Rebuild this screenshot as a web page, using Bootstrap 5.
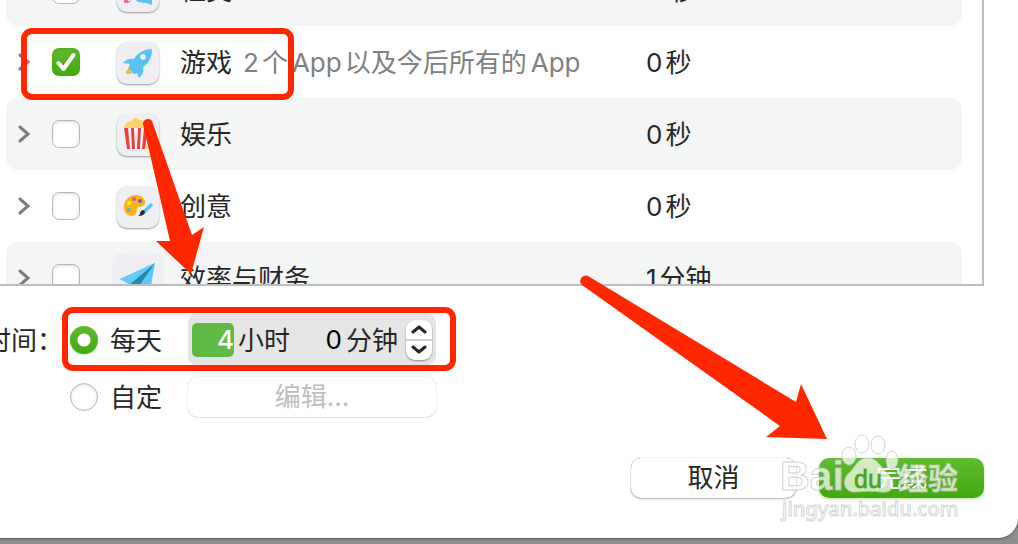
<!DOCTYPE html>
<html lang="zh-CN">
<head>
<meta charset="utf-8">
<meta name="viewport" content="width=device-width, initial-scale=1">
<title>App 限额</title>
<link href="https://cdn.jsdelivr.net/npm/bootstrap@5.3.0/dist/css/bootstrap.min.css" rel="stylesheet">
<style>
  body { background: #8e8e8e; font-family: Inter, "Noto Sans CJK SC", sans-serif; font-size: 26px; line-height: 40px; color: #262626; }
  .sheet { background: #fff; border-bottom-right-radius: 20px; padding-bottom: 40px; box-shadow: 0 1px 2px #555; margin-bottom: 6px; }
  .app-list { height: 286px; margin-right: 34px; padding: 0 20px 0 6px; border: solid #bdbdbd; border-width: 0 2px 2px 0; overflow: hidden; }
  .app-table { width: 100%; table-layout: fixed; border-collapse: separate; border-spacing: 0; margin-top: -46px; }
  .app-table td { height: 72px; padding: 0; vertical-align: middle; white-space: nowrap; }
  .app-table td:nth-child(n+3) { padding-top: 2px; }
  .app-table tr:nth-child(odd) td { background: #f4f6f5; }
  .app-table td:first-child { border-radius: 12px 0 0 12px; padding-left: 12px; }
  .app-table td:last-child { border-radius: 0 12px 12px 0; }
  .c-toggle { width: 46px; } .c-check { width: 58px; } .c-icon { width: 70px; } .c-time { width: 316px; }
  .disclose { border: 0; background: none; padding: 0; display: block; width: 12px; }
  .disclose svg, .app-icon svg, .stepper svg { display: block; }
  .form-check-input.tick, .form-check-input.dot { width: 28px; height: 28px; margin: 0; border: 1px solid #b9b9b9; box-shadow: inset 0 1px 3px #0002; float: none; display: block; flex: none; }
  .form-check-input.tick { border-radius: 7px; }
  .form-check-input.tick:checked { border: 0; background: url("data:image/svg+xml,%3Csvg xmlns='http://www.w3.org/2000/svg' viewBox='0 0 28 28'%3E%3Cpath d='M6.500 15l5 6L21.500 7' fill='none' stroke='%23fff' stroke-width='4' stroke-linecap='round' stroke-linejoin='round'/%3E%3C/svg%3E"), linear-gradient(#61ba31, #42aa0d); }
  .form-check-input.dot:checked { border: 0; background: radial-gradient(circle, #fff 6px, #fff0 7px), linear-gradient(#61ba31, #42aa0d); box-shadow: 0 1px 2px #0003; }
  .app-icon { width: 42px; height: 42px; margin-left: 7px; border-radius: 10px; background: #efeef3; box-shadow: 0 1px 2px #0006; overflow: hidden; }
  .app-icon.large { width: 52px; height: 52px; margin-left: 2px; box-shadow: none; }
  .detail { color: #808080; margin-left: 11px; }
  .unit { margin-left: 3px; }
  .detail .unit { margin-right: 4px; }
  .limit-label { width: 63px; overflow: hidden; white-space: nowrap; }
  .limit { padding-top: 28px; row-gap: 12px; line-height: 36px; }
  .choice { width: 118px; margin-left: 7px; }
  .choice label { margin-left: 12px; }
  .duration { width: 248px; height: 51px; padding: 0 4px; border-radius: 8px; background: #e5e5e5; }
  .duration input { width: 42px; height: 34px; border: 0; padding: 0; text-align: right; background: none; color: #000; outline: 0; border-radius: 5px; }
  .duration input.active { background: #62ba46; color: #fff; font-weight: 500; }
  .duration .minutes { margin-left: 10px; }
  .limit label, .limit-label span { padding-top: 2px; }
  .stepper { width: 26px; height: 40px; margin-left: auto; border-radius: 9px; background: #fff; box-shadow: 0 1px 2px #0006; }
  .stepper button { flex: 1; border: 0; background: none; padding: 0; display: flex; align-items: center; justify-content: center; }
  .stepper button + button { border-top: 2px solid #d2d2d2; }
  .push { --bs-btn-font-size: 26px; --bs-btn-line-height: 38px; --bs-btn-padding-y: 0; --bs-btn-border-width: 0; --bs-btn-border-radius: 10px; --bs-btn-bg: #fff; --bs-btn-color: #262626; height: 40px; width: 165px; box-shadow: 0 0 1px #0008, 0 1px 2px #0004; }
  .push.edit { width: 248px; --bs-btn-disabled-color: #bebebe; --bs-btn-disabled-bg: #fff; --bs-btn-disabled-opacity: 1; box-shadow: 0 0 2px #0003, 0 1px 1px #0001; }
  .push.done { --bs-btn-color: #fff; background: linear-gradient(#61ba31, #42aa0d); box-shadow: 0 1px 3px #42aa0d66; }
  .actions { padding: 41px 34px 0 0; gap: 23px; }
  .overlay { position: absolute; top: 0; left: 0; pointer-events: none; }
  .watermark { position: absolute; right: 50px; bottom: 12px; pointer-events: none; }
</style>
</head>
<body>
<main class="sheet position-relative">
  <div class="app-list">
    <table class="app-table">
      <colgroup><col class="c-toggle"><col class="c-check"><col class="c-icon"><col><col class="c-time"></colgroup>
      <tbody>
        <tr>
          <td><button class="disclose" aria-label="展开"><svg width="12" height="18" viewBox="0 0 12 18" fill="none" stroke="#7c7c7c" stroke-width="3" stroke-linecap="round"><path d="M2 2l8 7-8 7"/></svg></button></td>
          <td><input class="form-check-input tick" type="checkbox" id="social"></td>
          <td><div class="app-icon"><svg width="42" height="42" viewBox="1 1 42 42"><path d="M8 16h10v14l-6 4-4 0z" fill="#e96aa5"/><path d="M10 16h14v15l-12 1z" fill="#efeef3"/><path d="M19 22h17v14l-6-2c-5 0-9-1-11-4z" fill="#5ac1f5"/></svg></div></td>
          <td><label for="social">社交</label></td>
          <td>11<span class="unit">秒</span></td>
        </tr>
        <tr>
          <td><button class="disclose" aria-label="展开"><svg width="12" height="18" viewBox="0 0 12 18" fill="none" stroke="#7c7c7c" stroke-width="3" stroke-linecap="round"><path d="M2 2l8 7-8 7"/></svg></button></td>
          <td><input class="form-check-input tick" type="checkbox" id="games" checked></td>
          <td><div class="app-icon"><svg width="42" height="42" viewBox="1 1 42 42"><path d="M36 8c-7 0-14 3-18 10-4-1-8 0-11 4l7 1-2 5 6 5 3-1 2 5c4-3 5-7 4-11 6-4 9-10 9-18z" fill="#5ac1f5"/><circle cx="27" cy="16" r="2.700" fill="#fff"/><path d="M13 27c-2 2-4 4-3 6 3 0 6 0 7-3l-3 1z" fill="#fdb827"/></svg></div></td>
          <td><label for="games">游戏</label><span class="detail">2<span class="unit">个</span>App<span class="unit">以及今后所有的</span>App</span></td>
          <td>0<span class="unit">秒</span></td>
        </tr>
        <tr>
          <td><button class="disclose" aria-label="展开"><svg width="12" height="18" viewBox="0 0 12 18" fill="none" stroke="#7c7c7c" stroke-width="3" stroke-linecap="round"><path d="M2 2l8 7-8 7"/></svg></button></td>
          <td><input class="form-check-input tick" type="checkbox" id="fun"></td>
          <td><div class="app-icon"><svg width="42" height="42" viewBox="1 1 42 42"><path d="M8 16c0-5 3-8 7-7 2-5 6-5 8-2 4-1 8 4 7 9z" fill="#fdd06c"/><path d="M8 15h24l-3 21H11z" fill="#f8f4f5"/><path d="M8 15h4l2 21h-3zM15 15h3l1 21h-3zM22 15h3l-1 21h-3zM28 15h4l-3 21h-3z" fill="#e9403f"/><path d="M29 36l3-5 4 5z" fill="#fdd06c"/></svg></div></td>
          <td><label for="fun">娱乐</label></td>
          <td>0<span class="unit">秒</span></td>
        </tr>
        <tr>
          <td><button class="disclose" aria-label="展开"><svg width="12" height="18" viewBox="0 0 12 18" fill="none" stroke="#7c7c7c" stroke-width="3" stroke-linecap="round"><path d="M2 2l8 7-8 7"/></svg></button></td>
          <td><input class="form-check-input tick" type="checkbox" id="creative"></td>
          <td><div class="app-icon"><svg width="42" height="42" viewBox="1 1 42 42"><path d="M8 22c0-7 5-12 12-12 6 0 9 4 9 8 0 5-8 2-8 6 0 5-3 7-6 7-5-1-7-4-7-9z" fill="#f8b31d"/><circle cx="18" cy="14" r="2" fill="#e94f93"/><circle cx="24" cy="16" r="2" fill="#5369bd"/><circle cx="13" cy="18" r="2" fill="#ffee2c"/><circle cx="13" cy="25" r="2" fill="#55b9b5"/><path d="M28 27l7-7" stroke="#5ac1f5" stroke-width="3.500" stroke-linecap="round"/><path d="M22 31c3-1 1-5 5-6 3 1 3 6-5 6z" fill="#252a30"/></svg></div></td>
          <td><label for="creative">创意</label></td>
          <td>0<span class="unit">秒</span></td>
        </tr>
        <tr>
          <td><button class="disclose" aria-label="展开"><svg width="12" height="18" viewBox="0 0 12 18" fill="none" stroke="#7c7c7c" stroke-width="3" stroke-linecap="round"><path d="M2 2l8 7-8 7"/></svg></button></td>
          <td><input class="form-check-input tick" type="checkbox" id="work"></td>
          <td><div class="app-icon large"><svg width="52" height="52"><path d="M8 26l35-16-6 34-12-8z" fill="#5ac8fa"/><path d="M43 10L18 31v12l7-7z" fill="#2489ab"/><path d="M8 26l35-16-25 21z" fill="#64ccfb"/></svg></div></td>
          <td><label for="work">效率与财务</label></td>
          <td>1<span class="unit">分钟</span></td>
        </tr>
      </tbody>
    </table>
  </div>

  <form>
    <div class="limit d-flex flex-column">
      <div class="d-flex align-items-center">
        <div class="limit-label d-flex justify-content-end"><span>时间：</span></div>
        <div class="choice d-flex align-items-center"><input class="form-check-input dot" type="radio" name="when" id="daily" checked><label for="daily">每天</label></div>
        <div class="duration d-flex align-items-center">
          <input class="active" id="hours" value="4"><label class="ms-1" for="hours">小时</label>
          <input class="minutes" id="minutes" value="0"><label class="ms-1" for="minutes">分钟</label>
          <div class="stepper d-flex flex-column">
            <button type="button" aria-label="增加"><svg width="16" height="10" fill="none" stroke="#262626" stroke-width="3" stroke-linecap="round" stroke-linejoin="round"><path d="M2 8l6-5 6 5"/></svg></button>
            <button type="button" aria-label="减少"><svg width="16" height="10" fill="none" stroke="#262626" stroke-width="3" stroke-linecap="round" stroke-linejoin="round"><path d="M2 2l6 5 6-5"/></svg></button>
          </div>
        </div>
      </div>
      <div class="d-flex align-items-center">
        <div class="limit-label"></div>
        <div class="choice d-flex align-items-center"><input class="form-check-input dot" type="radio" name="when" id="custom"><label for="custom">自定</label></div>
        <button class="btn push edit" type="button" disabled>编辑...</button>
      </div>
    </div>
    <div class="actions d-flex justify-content-end">
      <button class="btn push" type="button">取消</button>
      <button class="btn push done" type="submit">完成</button>
    </div>
  </form>

  <svg class="overlay" width="840" height="450" aria-hidden="true">
    <g fill="none" stroke="#ff2700" stroke-width="6"><rect x="24" y="31" width="267" height="66" rx="8"/><rect x="65" y="310" width="388" height="58" rx="8"/></g>
    <g fill="#ff2700"><path d="M143 124a5 5 0 0 1 9-3L192 235l12-8-13 47-35-33 14 0z"/><path d="M582 285a5.500 5.500 0 0 1 6-9L796 402l5-18 26 55-61-2 14-11z"/></g>
  </svg>
  <svg class="watermark" width="188" height="96" aria-hidden="true">
    <g fill="#fff" fill-opacity=".72" stroke="#c0c0c0" stroke-opacity=".7" font-family="Liberation Sans, Noto Sans CJK SC, sans-serif" font-weight="700">
      <text x="0" y="60" font-size="41">Bai</text>
      <ellipse cx="69" cy="26" rx="7" ry="9"/><ellipse cx="82" cy="14" rx="7" ry="9"/><ellipse cx="98" cy="15" rx="7" ry="9"/><ellipse cx="112" cy="30" rx="6" ry="9"/>
      <path d="M88 28c9 0 12 8 18 14 12 10 8 22-5 20-9-1-17-1-25 0-13 1-15-13-6-20 6-6 8-14 18-14z"/>
      <text x="74" y="58" font-size="25" font-weight="400" fill="#46a41a" fill-opacity="1" stroke="#46a41a">du</text>
      <text x="118" y="59" font-size="30">经验</text>
      <text x="2" y="86" font-size="20" font-weight="500" font-family="Noto Sans, sans-serif">jingyan.baidu.com</text>
    </g>
  </svg>
</main>
<script src="https://cdn.jsdelivr.net/npm/bootstrap@5.3.0/dist/js/bootstrap.bundle.min.js"></script>
</body>
</html>
